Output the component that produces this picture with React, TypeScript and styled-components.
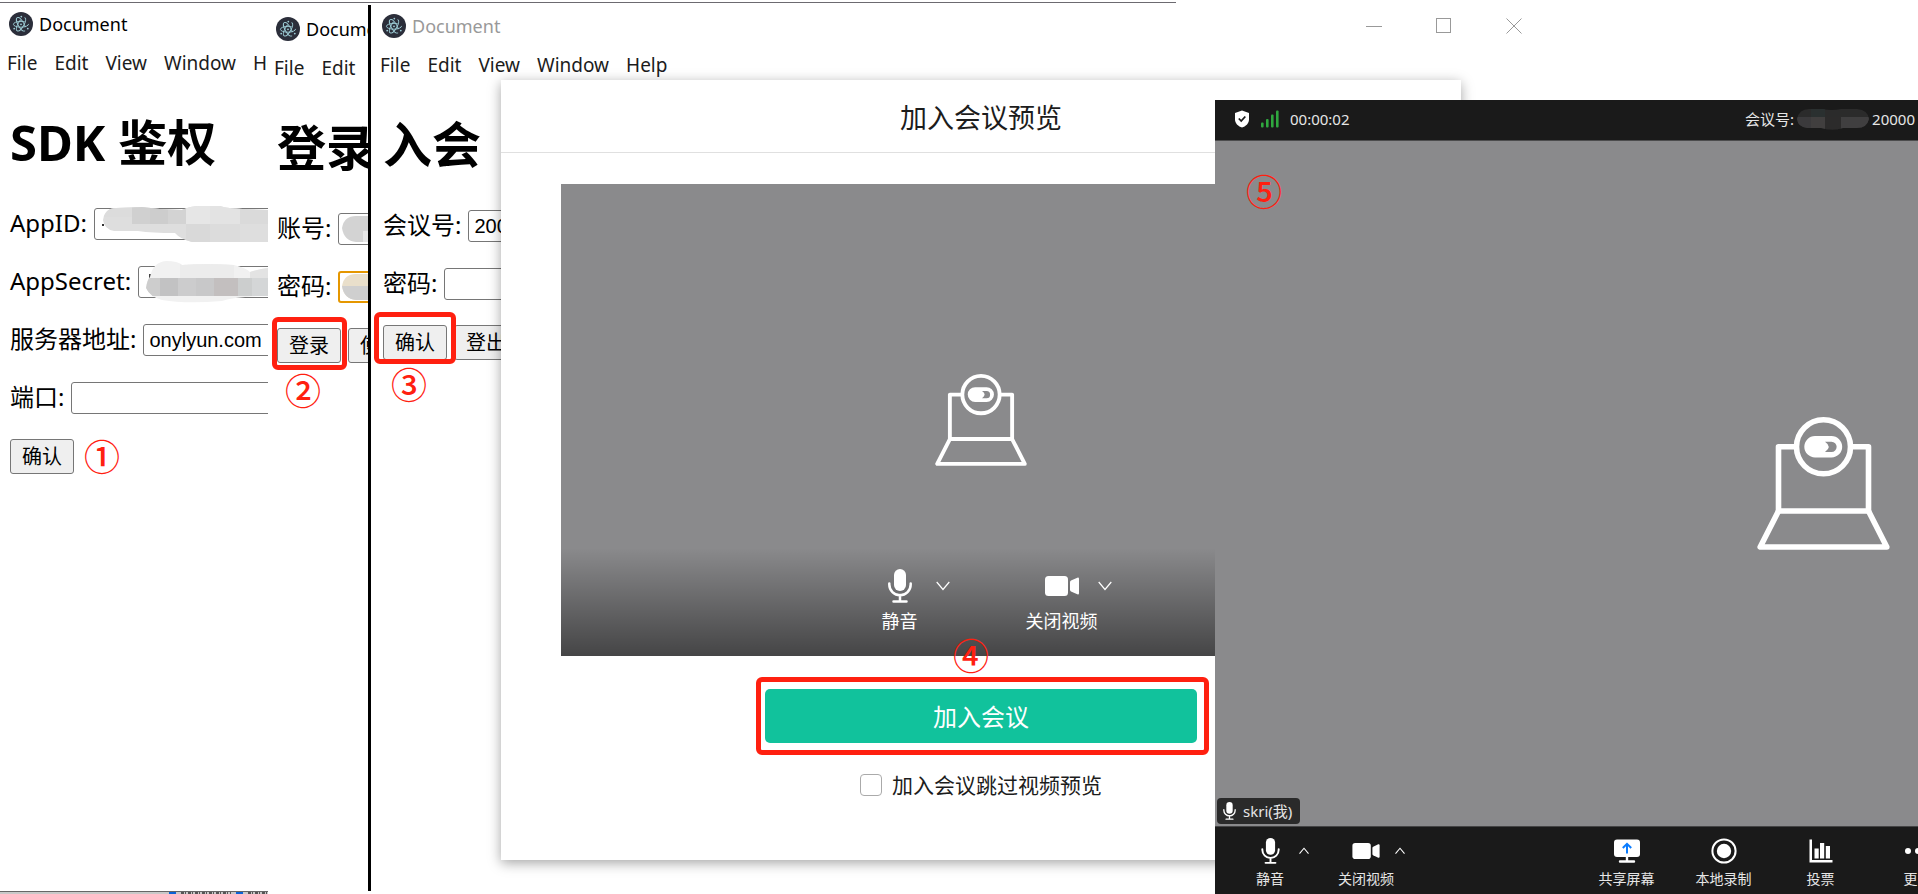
import React from "react";
import styled, { createGlobalStyle, css } from "styled-components";

const ui = `"Noto Sans", "Noto Sans CJK SC", sans-serif`;
const field = `"Liberation Sans", "Noto Sans CJK SC", sans-serif`;
const red = "#ff2010";
const videoGrey = "#8a8a8c";

const GlobalStyle = createGlobalStyle`
  *, *::before, *::after { box-sizing: border-box; }
  body { margin: 0; background: #fff; color: #000; font-family: ${ui}; }
  button, input { font: inherit; color: inherit; margin: 0; }
  svg { flex: none; }
`;

/* ---------- desktop and windows ---------- */

const Desktop = styled.main`
  position: relative;
  display: flex;
  flex-direction: column;
  min-height: 100vh;
  padding-top: 2px;
  overflow: hidden;
  background: #fff;
`;

const TopEdge = styled.div`
  height: 1px;
  max-width: 1176px;
  background: #6c6a70;
`;

const Windows = styled.div`
  flex: 1;
  display: flex;
`;

const AppWindow = styled.section<{ $width?: number; $drop: number; $inset: number }>`
  display: flex;
  flex-direction: column;
  padding-top: ${(p) => p.$drop}px;
  overflow: hidden;
  > :not(:last-child),
  > form {
    margin-left: ${(p) => p.$inset}px;
  }
  ${(p) =>
    p.$width
      ? css`
          flex: 0 0 ${p.$width}px;
        `
      : css`
          flex: 1 1 0;
          max-width: 1178px;
        `}
`;

const Divider = styled.div`
  flex: 0 0 3px;
  margin: 2px 0 3px;
  background: #000;
`;

const TitleBar = styled.header`
  display: flex;
  align-items: center;
  gap: 6px;
  height: 24px;
  padding-left: 8px;
  font-size: 18px;
  line-height: 24px;
`;

const Title = styled.span<{ $muted?: boolean }>`
  color: ${(p) => (p.$muted ? "#999" : "#000")};
`;

const WindowControls = styled.div`
  display: flex;
  margin-left: auto;
`;

const WindowControl = styled.button`
  display: flex;
  align-items: center;
  justify-content: center;
  width: 70px;
  height: 24px;
  padding: 0;
  border: 0;
  background: none;
  color: #999;
`;

const MenuBar = styled.nav`
  display: flex;
  gap: 17px;
  margin-top: 14px;
  padding-left: 6px;
`;

const MenuItem = styled.button`
  flex: none;
  padding: 0;
  border: 0;
  background: none;
  color: #1c1c1c;
  font-size: 19px;
  line-height: 26px;
`;

const Form = styled.form`
  display: flex;
  flex-direction: column;
  gap: 26px;
  padding: 33px 0 0 9px;
`;

const Heading = styled.h1`
  margin: 0 0 7px;
  font-size: 49px;
  line-height: 66px;
  font-weight: 700;
  white-space: nowrap;
`;

const Field = styled.div`
  position: relative;
  display: flex;
  gap: 7px;
  height: 32px;
`;

const Label = styled.label`
  flex: none;
  font-size: 24px;
  line-height: 30px;
`;

const TextInput = styled.input<{ $focused?: boolean }>`
  flex: none;
  width: 252px;
  height: 32px;
  padding: 0 5px;
  border: ${(p) => (p.$focused ? "2px solid #e59700" : "1px solid #767676")};
  border-radius: 3px;
  outline: 0;
  background: #fff;
  font-family: ${field};
  font-size: 20px;
`;

const Mosaic = styled.svg<{ $left: number }>`
  position: absolute;
  left: ${(p) => p.$left}px;
  top: 50%;
  transform: translateY(-50%);
`;

const Actions = styled.div`
  display: flex;
  gap: 7px;
  margin-top: -1px;
`;

const FormButton = styled.button`
  flex: none;
  height: 35px;
  padding: 0 11px;
  border: 1px solid #767676;
  border-radius: 3px;
  background: #efefef;
  font-size: 20px;
  line-height: 33px;
`;

const WindowBottom = styled.div`
  display: flex;
  justify-content: flex-end;
  height: 3px;
  margin-top: auto;
  border-top: 1px solid #666;
  background: #c8c8c8;
`;

/* ---------- preview dialog ---------- */

const Dialog = styled.section`
  position: absolute;
  left: 501px;
  top: 80px;
  width: 960px;
  padding-bottom: 60px;
  background: #fff;
  box-shadow: 0 3px 12px rgba(0, 0, 0, 0.36);
`;

const DialogTitle = styled.h2`
  margin: 0;
  padding: 20px 0 16px;
  border-bottom: 1px solid #e0e0e0;
  color: #1c1c1c;
  font-size: 27px;
  line-height: 36px;
  font-weight: 400;
  text-align: center;
`;

const DialogBody = styled.div`
  display: flex;
  flex-direction: column;
  align-items: center;
  padding: 31px 60px 0;
`;

const Preview = styled.div`
  display: grid;
  width: 100%;
  height: 472px;
  background: ${videoGrey};
  > * {
    grid-area: 1 / 1;
  }
  > svg {
    place-self: center;
  }
`;

const PreviewControls = styled.div`
  align-self: end;
  display: flex;
  justify-content: center;
  gap: 76px;
  height: 108px;
  padding: 21px 0 0 13px;
  background: linear-gradient(rgba(0, 0, 0, 0), rgba(0, 0, 0, 0.5));
  color: #fff;
`;

const JoinButton = styled.button`
  width: 432px;
  height: 54px;
  margin-top: 33px;
  padding: 2px 0 0;
  border: 0;
  border-radius: 5px;
  background: #11c29c;
  color: #fff;
  font-size: 24px;
  line-height: 52px;
`;

const SkipOption = styled.label`
  display: flex;
  align-items: center;
  gap: 10px;
  margin-top: 27px;
  color: #1c1c1c;
  font-size: 21px;
  line-height: 30px;
`;

const Checkbox = styled.input`
  appearance: none;
  width: 22px;
  height: 22px;
  border: 1px solid #aaa;
  border-radius: 4px;
  background: #fff;
`;

/* ---------- shared media control ---------- */

const MediaGroup = styled.div`
  display: flex;
`;

const MediaButton = styled.button<{ $size: "large" | "small"; $width: number }>`
  display: flex;
  flex-direction: column;
  align-items: center;
  flex: none;
  width: ${(p) => p.$width}px;
  padding: 0;
  border: 0;
  background: none;
  white-space: nowrap;
  font-size: ${(p) => (p.$size === "large" ? 18 : 14)}px;
  line-height: ${(p) => (p.$size === "large" ? 22 : 20)}px;
`;

const IconBox = styled.span<{ $size: "large" | "small" }>`
  display: flex;
  align-items: center;
  justify-content: center;
  height: ${(p) => (p.$size === "large" ? 34 : 26)}px;
  margin-bottom: ${(p) => (p.$size === "large" ? 7 : 5)}px;
`;

const CaretButton = styled.button<{ $size: "large" | "small" }>`
  display: flex;
  align-items: center;
  width: ${(p) => (p.$size === "large" ? 14 : 10)}px;
  height: ${(p) => (p.$size === "large" ? 34 : 26)}px;
  padding: 0;
  border: 0;
  background: none;
`;

/* ---------- meeting window ---------- */

const Meeting = styled.section`
  position: absolute;
  left: 1215px;
  right: 0;
  top: 100px;
  bottom: 0;
  display: flex;
  flex-direction: column;
  overflow: hidden;
  background: #1a1a1a;
  color: #e6e6e6;
`;

const StatusBar = styled.header`
  display: flex;
  align-items: center;
  height: 41px;
  padding: 0 3px 3px 19px;
  border-bottom: 1px solid #4c4c4d;
  font-size: 15px;
  line-height: 22px;
  white-space: nowrap;
`;

const Status = styled.div`
  display: flex;
  align-items: center;
  gap: 11px;
`;

const MeetingNumber = styled.div`
  display: flex;
  align-items: center;
  gap: 3px;
  margin-left: auto;
`;

const Stage = styled.div`
  flex: 1;
  display: grid;
  grid-template-columns: 1216px;
  background: ${videoGrey};
  > * {
    grid-area: 1 / 1;
  }
  > svg {
    place-self: center;
  }
`;

const NameTag = styled.div`
  place-self: end start;
  display: flex;
  align-items: center;
  gap: 7px;
  height: 26px;
  margin: 0 0 2px 2px;
  padding: 0 8px 0 6px;
  border-radius: 4px;
  background: #2a2a2a;
  font-size: 15px;
  line-height: 26px;
`;

const Toolbar = styled.footer`
  display: flex;
  height: 68px;
  padding: 11px 0 0 26px;
  border-top: 1px solid #444445;
`;

const MediaTools = styled.div`
  display: flex;
  flex: none;
  gap: 28px;
  margin-right: 173px;
`;

/* ---------- step annotations ---------- */

const Step = styled.span<{ $x: number; $y: number }>`
  position: absolute;
  left: ${(p) => p.$x}px;
  top: ${(p) => p.$y}px;
  width: 36px;
  color: ${red};
  font-family: "Noto Sans CJK SC", sans-serif;
  font-size: 36px;
  line-height: 32px;
  font-weight: 500;
`;

const Frame = styled.div<{ $x: number; $y: number; $w: number; $h: number }>`
  position: absolute;
  left: ${(p) => p.$x}px;
  top: ${(p) => p.$y}px;
  width: ${(p) => p.$w}px;
  height: ${(p) => p.$h}px;
  border: 5px solid ${red};
  border-radius: 6px;
  pointer-events: none;
`;

/* ---------- drawings ---------- */

const ElectronIcon = () => (
  <svg width="24" height="24" viewBox="0 0 24 24" aria-hidden="true">
    <circle cx="12" cy="12" r="12" fill="#2b2e3a" />
    <g fill="none" stroke="#9fcfd8" strokeWidth="0.9" strokeLinecap="round">
      <ellipse cx="12" cy="12.3" rx="7.6" ry="2.9" transform="rotate(60 12 12.3)" strokeDasharray="30 5" />
      <ellipse cx="12" cy="12.3" rx="7.6" ry="2.9" transform="rotate(-60 12 12.3)" strokeDasharray="29 6" />
      <ellipse cx="12" cy="12.3" rx="7.6" ry="2.9" strokeDasharray="29 6" />
    </g>
    <g fill="#9fcfd8">
      <circle cx="12" cy="12.3" r="0.9" />
      <circle cx="12.3" cy="4.6" r="0.9" />
      <circle cx="5.2" cy="16.6" r="0.9" />
      <circle cx="18.8" cy="16.6" r="0.9" />
    </g>
  </svg>
);

const LaptopIcon = ({ width, height }: { width: number; height: number }) => (
  <svg width={width} height={height} viewBox="0 0 133 133" aria-hidden="true">
    <g fill="none" stroke="#fff" strokeWidth="5.6" strokeLinejoin="round">
      <circle cx="66.5" cy="29.8" r="27" />
      <path d="M39.5 29.8H21.5V94H111.5V29.8H93.5" />
      <path d="M21.5 94L3.2 130H129.8L111.5 94" />
    </g>
    <path
      fill="#fff"
      fillRule="evenodd"
      d="M58 19H74.500a10.700 10.700 0 0 1 0 21.400H58a10.700 10.700 0 0 1 0-21.400zM68 24.700q7.500 5 0 10.300h6.500a5.150 5.150 0 0 0 0-10.300z"
    />
  </svg>
);

const MicIcon = ({ width, height }: { width: number; height: number }) => (
  <svg width={width} height={height} viewBox="0 0 24 34" aria-hidden="true">
    <rect x="6" y="0" width="12" height="22" rx="6" fill="#fff" />
    <path
      d="M1.300 14.500V15.500a10.700 10.700 0 0 0 21.400 0V14.500M12 26V32M5.500 32.500H18.500"
      fill="none"
      stroke="#fff"
      strokeWidth="2.5"
      strokeLinecap="round"
    />
  </svg>
);

const CameraIcon = ({ width, height }: { width: number; height: number }) => (
  <svg width={width} height={height} viewBox="0 0 34 20" fill="#fff" aria-hidden="true">
    <rect width="23" height="20" rx="3.500" />
    <path d="M25 6.200Q25 5.200 26 4.600L32.300 1.700Q34 1.200 34 2.800V17.200Q34 18.800 32.300 18.300L26 15.400Q25 14.800 25 13.800Z" />
  </svg>
);

const Caret = ({ size, up }: { size: number; up?: boolean }) => (
  <svg width={size} height={(size * 9) / 14 + 1} viewBox="0 0 14 10" aria-hidden="true">
    <path d={up ? "M0.7 9L7 1.500L13.300 9" : "M0.700 1L7 8.500L13.300 1"} fill="none" stroke="#fff" strokeWidth={up ? 1.5 : 1.2} />
  </svg>
);

const ShieldIcon = () => (
  <svg width="16" height="18" viewBox="0 0 16 18" aria-hidden="true">
    <path d="M8 0.500L15 3V9.500C15 13.500 11.500 16.500 8 17.500C4.500 16.500 1 13.500 1 9.500V3Z" fill="#fff" />
    <path d="M4.800 8.500L7.200 11L11.300 6.500" fill="none" stroke="#1a1a1a" strokeWidth="1.800" />
  </svg>
);

const SignalIcon = () => (
  <svg width="18" height="18" viewBox="0 0 18 18" fill="#2fa83e" aria-hidden="true">
    <rect x="0" y="12.500" width="2.600" height="5" rx="1" />
    <rect x="5" y="9" width="2.600" height="8.500" rx="1" />
    <rect x="10" y="4.500" width="2.600" height="13" rx="1" />
    <rect x="15" y="0.500" width="2.600" height="17" rx="1" />
  </svg>
);

const ShareIcon = () => (
  <svg width="26" height="24" viewBox="0 0 26 24" aria-hidden="true">
    <rect y="0.500" width="26" height="17.500" rx="3" fill="#fff" />
    <path d="M13 18V22M6 22.500H20" stroke="#fff" strokeWidth="2.400" strokeLinecap="round" />
    <path d="M13 14.500V5M8.800 9L13 4.800L17.200 9" fill="none" stroke="#0a7cff" strokeWidth="2" />
  </svg>
);

const RecordIcon = () => (
  <svg width="26" height="26" viewBox="0 0 26 26" aria-hidden="true">
    <circle cx="13" cy="13" r="11.600" fill="none" stroke="#fff" strokeWidth="2" />
    <circle cx="13" cy="13" r="7.200" fill="#fff" />
  </svg>
);

const PollIcon = () => (
  <svg width="24" height="24" viewBox="0 0 24 24" fill="#fff" aria-hidden="true">
    <path d="M0.500 0.500H3V21H23.500V23.500H0.500Z" />
    <rect x="5.500" y="9.500" width="4.200" height="10" />
    <rect x="11" y="4" width="4.200" height="15.500" />
    <rect x="16.800" y="7" width="4.200" height="12.500" />
  </svg>
);

const MoreIcon = () => (
  <svg width="26" height="6" viewBox="0 0 26 6" fill="#fff" aria-hidden="true">
    <circle cx="3" cy="3" r="3" />
    <circle cx="13" cy="3" r="3" />
    <circle cx="23" cy="3" r="3" />
  </svg>
);

const MinimizeIcon = () => (
  <svg width="16" height="16" viewBox="0 0 16 16" stroke="currentColor" aria-hidden="true">
    <path d="M0 8.500H16" />
  </svg>
);

const MaximizeIcon = () => (
  <svg width="16" height="16" viewBox="0 0 16 16" fill="none" stroke="currentColor" aria-hidden="true">
    <rect x="0.500" y="0.500" width="14" height="14" />
  </svg>
);

const CloseIcon = () => (
  <svg width="16" height="16" viewBox="0 0 16 16" stroke="currentColor" aria-hidden="true">
    <path d="M0.500 0.500L15.500 15.500M15.500 0.500L0.500 15.500" />
  </svg>
);

const AppIdMosaic = () => (
  <Mosaic $left={92} width="168" height="38" viewBox="0 0 168 38" aria-hidden="true">
    <clipPath id="appid-blob">
      <path d="M1 15Q3 3 14 3L40 2Q60 5 80 5Q88 1 98 1H118Q125 4 168 5V37H90Q78 34 73 28Q50 28 36 26H12Q2 24 1 15Z" />
    </clipPath>
    <rect x="0" y="19" width="2" height="2" fill="#333" />
    <g clipPath="url(#appid-blob)">
      <rect width="168" height="38" fill="#dedede" />
      <rect width="30" height="12" fill="#dcdcdc" />
      <rect x="30" width="18" height="19" fill="#d0d0d0" />
      <rect x="48" width="18" height="19" fill="#cdcdcd" />
      <rect x="66" width="18" height="19" fill="#d3d3d3" />
      <rect x="84" width="24" height="19" fill="#e6e6e6" />
      <rect x="108" width="30" height="19" fill="#e3e3e3" />
      <rect x="138" width="30" height="19" fill="#dadada" />
      <rect x="84" y="19" width="24" height="19" fill="#d9d9d9" />
      <rect x="108" y="19" width="30" height="19" fill="#dcdcdc" />
    </g>
  </Mosaic>
);

const AppSecretMosaic = () => (
  <Mosaic $left={136} width="125" height="44" viewBox="0 0 125 44" aria-hidden="true">
    <clipPath id="secret-blob">
      <path d="M0 28Q1 20 4 17Q7 2 20 1Q32 1 36 5Q60 3 88 5Q100 8 104 12Q116 8 125 8V36Q90 36 76 41Q40 44 16 40Q4 37 0 28Z" />
    </clipPath>
    <rect x="3" y="14" width="2" height="4" fill="#444" />
    <g clipPath="url(#secret-blob)">
      <rect width="125" height="44" fill="#f1f1f1" />
      <rect x="34" y="0" width="54" height="19" fill="#ececec" />
      <rect x="104" y="8" width="21" height="12" fill="#e3e3e3" />
      <rect y="18" width="14" height="18" fill="#cdcdcd" />
      <rect x="14" y="18" width="18" height="18" fill="#c2c2c3" />
      <rect x="32" y="18" width="18" height="18" fill="#cccccd" />
      <rect x="50" y="18" width="18" height="18" fill="#c8c8c9" />
      <rect x="68" y="18" width="24" height="18" fill="#c3bfbf" />
      <rect x="92" y="18" width="14" height="18" fill="#cccece" />
      <rect x="106" y="18" width="19" height="18" fill="#d4d6d7" />
    </g>
  </Mosaic>
);

const LoginMosaic = ({ warm }: { warm?: boolean }) => (
  <Mosaic $left={65} width="40" height="28" viewBox="0 0 40 28" aria-hidden="true">
    <path d="M0 13Q2 1 14 1H40V27H14Q2 26 0 13Z" fill={warm ? "#e9dfcb" : "#d3d3d3"} />
    {warm ? <path d="M0 13H40V27H14Q2 26 0 13Z" fill="#cfcfcf" /> : <path d="M21 16H40V27H21Z" fill="#e6e6e6" />}
  </Mosaic>
);

const NumberMosaic = () => (
  <svg width="72" height="22" viewBox="0 0 72 22" aria-hidden="true">
    <clipPath id="number-blob">
      <path d="M0 11Q2 1 12 1H26Q34 3 44 1H60Q71 2 72 11Q70 20 60 20H46Q36 23 24 20H10Q1 19 0 11Z" />
    </clipPath>
    <g clipPath="url(#number-blob)">
      <rect width="72" height="22" fill="#2b2b2b" />
      <rect x="14" width="14" height="9" fill="#2a3030" />
      <rect y="9" width="14" height="13" fill="#3b3a3c" />
      <rect x="14" y="9" width="14" height="13" fill="#413f3f" />
      <rect x="28" y="9" width="16" height="13" fill="#2c2b2b" />
      <rect x="44" y="9" width="28" height="13" fill="#403f40" />
    </g>
  </svg>
);

const TaskbarPeek = () => (
  <svg width="100" height="2" viewBox="0 0 100 2" aria-hidden="true">
    <rect x="1" width="7" height="2" fill="#0b62d6" />
    <rect x="68" width="7" height="2" fill="#0b62d6" />
    <path d="M13 1H63M80 1H100" stroke="#555" strokeWidth="2" strokeDasharray="3 1 1 2" />
  </svg>
);

/* ---------- assemblies ---------- */

const menus = ["File", "Edit", "View", "Window", "Help"];

const WindowHead = ({ muted, children }: { muted?: boolean; children?: React.ReactNode }) => (
  <>
    <TitleBar>
      <ElectronIcon />
      <Title $muted={muted}>Document</Title>
      {children}
    </TitleBar>
    <MenuBar>
      {menus.map((m) => (
        <MenuItem key={m} type="button">
          {m}
        </MenuItem>
      ))}
    </MenuBar>
  </>
);

const MediaControls = ({ size }: { size: "large" | "small" }) => {
  const large = size === "large";
  const width = large ? 72 : 58;
  const items = [
    { text: "静音", icon: large ? <MicIcon width={24} height={34} /> : <MicIcon width={19} height={26} /> },
    { text: "关闭视频", icon: large ? <CameraIcon width={34} height={20} /> : <CameraIcon width={28} height={16} /> },
  ];
  return (
    <>
      {items.map((i) => (
        <MediaGroup key={i.text}>
          <MediaButton type="button" $size={size} $width={width}>
            <IconBox $size={size}>{i.icon}</IconBox>
            {i.text}
          </MediaButton>
          <CaretButton type="button" $size={size} aria-label={i.text}>
            <Caret size={large ? 14 : 10} up={!large} />
          </CaretButton>
        </MediaGroup>
      ))}
    </>
  );
};

const meetingTools = [
  { text: "共享屏幕", icon: <ShareIcon /> },
  { text: "本地录制", icon: <RecordIcon /> },
  { text: "投票", icon: <PollIcon /> },
  { text: "更多", icon: <MoreIcon /> },
];

export default function App() {
  return (
    <Desktop>
      <GlobalStyle />
      <TopEdge />
      <Windows>
        <AppWindow $width={268} $drop={9} $inset={1}>
          <WindowHead />
          <Form>
            <Heading>SDK 鉴权</Heading>
            <Field>
              <Label htmlFor="app-id">AppID:</Label>
              <TextInput id="app-id" />
              <AppIdMosaic />
            </Field>
            <Field>
              <Label htmlFor="app-secret">AppSecret:</Label>
              <TextInput id="app-secret" />
              <AppSecretMosaic />
            </Field>
            <Field>
              <Label htmlFor="server">服务器地址:</Label>
              <TextInput id="server" defaultValue="onylyun.com" />
            </Field>
            <Field>
              <Label htmlFor="port">端口:</Label>
              <TextInput id="port" />
            </Field>
            <Actions>
              <FormButton type="button">确认</FormButton>
            </Actions>
          </Form>
          <WindowBottom>
            <TaskbarPeek />
          </WindowBottom>
        </AppWindow>

        <AppWindow $width={100} $drop={14} $inset={0}>
          <WindowHead />
          <Form>
            <Heading>登录</Heading>
            <Field>
              <Label htmlFor="account">账号:</Label>
              <TextInput id="account" />
              <LoginMosaic />
            </Field>
            <Field>
              <Label htmlFor="login-password">密码:</Label>
              <TextInput id="login-password" type="password" $focused />
              <LoginMosaic warm />
            </Field>
            <Actions>
              <FormButton type="button">登录</FormButton>
              <FormButton type="button">使用</FormButton>
            </Actions>
          </Form>
        </AppWindow>

        <Divider />

        <AppWindow $drop={11} $inset={3}>
          <WindowHead muted>
            <WindowControls>
              <WindowControl type="button" aria-label="Minimize">
                <MinimizeIcon />
              </WindowControl>
              <WindowControl type="button" aria-label="Maximize">
                <MaximizeIcon />
              </WindowControl>
              <WindowControl type="button" aria-label="Close">
                <CloseIcon />
              </WindowControl>
            </WindowControls>
          </WindowHead>
          <Form>
            <Heading>入会</Heading>
            <Field>
              <Label htmlFor="meeting-number">会议号:</Label>
              <TextInput id="meeting-number" defaultValue="200" />
            </Field>
            <Field>
              <Label htmlFor="meeting-password">密码:</Label>
              <TextInput id="meeting-password" type="password" />
            </Field>
            <Actions>
              <FormButton type="button">确认</FormButton>
              <FormButton type="button">登出</FormButton>
            </Actions>
          </Form>
        </AppWindow>
      </Windows>

      <Dialog>
        <DialogTitle>加入会议预览</DialogTitle>
        <DialogBody>
          <Preview>
            <LaptopIcon width={92} height={92} />
            <PreviewControls>
              <MediaControls size="large" />
            </PreviewControls>
          </Preview>
          <JoinButton type="button">加入会议</JoinButton>
          <SkipOption>
            <Checkbox type="checkbox" />
            加入会议跳过视频预览
          </SkipOption>
        </DialogBody>
      </Dialog>

      <Meeting>
        <StatusBar>
          <Status>
            <ShieldIcon />
            <SignalIcon />
            <span>00:00:02</span>
          </Status>
          <MeetingNumber>
            <span>会议号:</span>
            <NumberMosaic />
            <span>20000</span>
          </MeetingNumber>
        </StatusBar>
        <Stage>
          <LaptopIcon width={133} height={133} />
          <NameTag>
            <MicIcon width={13} height={18} />
            skri(我)
          </NameTag>
        </Stage>
        <Toolbar>
          <MediaTools>
            <MediaControls size="small" />
          </MediaTools>
          {meetingTools.map((t) => (
            <MediaButton key={t.text} type="button" $size="small" $width={97}>
              <IconBox $size="small">{t.icon}</IconBox>
              {t.text}
            </MediaButton>
          ))}
        </Toolbar>
      </Meeting>

      <Frame $x={272} $y={317} $w={75} $h={53} />
      <Frame $x={374} $y={312} $w={82} $h={52} />
      <Frame $x={756} $y={677} $w={453} $h={78} />
      <Step $x={84} $y={439}>①</Step>
      <Step $x={285} $y={373}>②</Step>
      <Step $x={391} $y={367}>③</Step>
      <Step $x={953} $y={638}>④</Step>
      <Step $x={1246} $y={174}>⑤</Step>
    </Desktop>
  );
}
